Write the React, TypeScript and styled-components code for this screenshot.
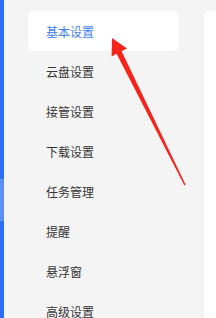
import React from "react";
import styled, { createGlobalStyle } from "styled-components";

const Global = createGlobalStyle`
  html, body { margin: 0; padding: 0; background: #f4f4f4; }
  body { font-family: "Noto Sans CJK SC", "Noto Sans", sans-serif; overflow: hidden; }
  #root { width: 216px; height: 318px; }
`;

const Page = styled.div`
  position: relative;
  display: flex;
  width: 216px;
  height: 318px;
  overflow: hidden;
  background: #f4f4f4;
`;

const Strip = styled.div`
  display: flex;
  flex-direction: column;
  width: 4px;
  flex: none;
`;

const StripSeg = styled.div<{ $h: number; $light?: boolean }>`
  height: ${(p) => p.$h}px;
  flex: none;
  background: ${(p) => (p.$light ? "#5b91f6" : "#2c6ff2")};
`;

const Menu = styled.nav`
  display: flex;
  flex-direction: column;
  width: 150px;
  flex: none;
  margin-left: 24px;
  padding-top: 11px;
`;

const Item = styled.div<{ $active?: boolean }>`
  height: 40px;
  flex: none;
  display: flex;
  align-items: center;
  padding-left: 18px;
  border-radius: 5px;
  font-size: 12px;
  color: ${(p) => (p.$active ? "#3f7ff6" : "#363636")};
  background: ${(p) => (p.$active ? "#ffffff" : "transparent")};
`;

const Content = styled.div`
  margin-left: 26px;
  margin-top: 11px;
  flex: 1;
  background: #ffffff;
  border-top-left-radius: 6px;
`;

const Arrow = styled.svg`
  position: absolute;
  left: 0;
  top: 0;
  pointer-events: none;
`;

const items = ["基本设置", "云盘设置", "接管设置", "下载设置", "任务管理", "提醒", "悬浮窗", "高级设置"];

export default function App() {
  return (
    <>
      <Global />
      <Page>
        <Strip>
          <StripSeg $h={179} />
          <StripSeg $h={42} $light />
          <StripSeg $h={97} />
        </Strip>
        <Menu>
          {items.map((t, i) => (
            <Item key={t} $active={i === 0}>
              {t}
            </Item>
          ))}
        </Menu>
        <Content />
        <Arrow width="216" height="318" viewBox="0 0 216 318">
          <polygon
            points="112,38 127,48.5 121.6,51.2 185.6,184.8 184.4,185.4 116.6,53.8 111.6,56.4"
            fill="#f7231b"
          />
        </Arrow>
      </Page>
    </>
  );
}
